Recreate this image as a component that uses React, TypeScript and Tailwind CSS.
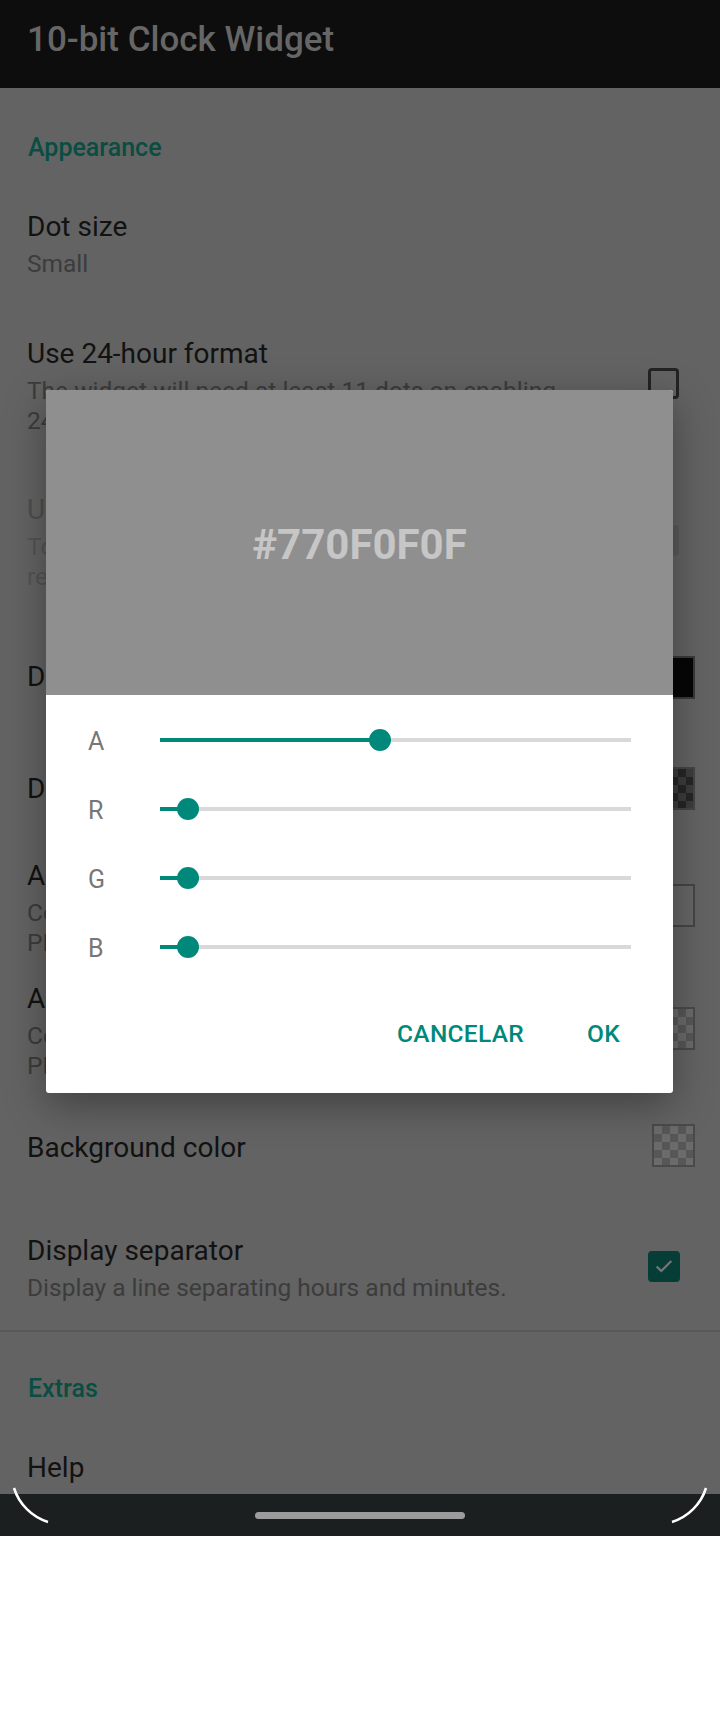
import React from 'react';

// Settings rows behind the dialog (colours are already dimmed by the scrim)
const ROWS = [
  { h: 'h-[127px]', title: 'Dot size', summary: ['Small'] },
  {
    h: 'h-[157px]',
    title: 'Use 24-hour format',
    summary: ['The widget will need at least 11 dots on enabling', '24-hour format.'],
    widget: 'box',
  },
  {
    h: 'h-[156px]',
    title: 'Use accent color for AM/PM',
    summary: ['To enable this option, the widget needs to be', 'resized to have at least 11 dots.'],
    widget: 'disabled',
    disabled: true,
  },
  { h: 'h-[114px]', title: 'Dot color', widget: 'black' },
  { h: 'h-[109px]', title: 'Dot background color', widget: 'dark' },
  {
    h: 'h-[129px]',
    title: 'AM/PM dot color',
    summary: ['Color of the dot used to indicate AM or', 'PM when 24-hour format is disabled.'],
    widget: 'empty',
  },
  {
    h: 'h-[117px]',
    title: 'AM/PM dot background color',
    summary: ['Color behind the dot used to indicate AM or', 'PM when 24-hour format is disabled.'],
    widget: 'light',
  },
  { h: 'h-[117px]', title: 'Background color', widget: 'light' },
  {
    h: 'h-[124px]',
    title: 'Display separator',
    summary: ['Display a line separating hours and minutes.'],
    widget: 'checked',
  },
];

const CHANNELS = [
  { label: 'A', value: 0x77 },
  { label: 'R', value: 0x0f },
  { label: 'G', value: 0x0f },
  { label: 'B', value: 0x0f },
];

function Checker({ a, b }: { a: string; b: string }) {
  const cells = [];
  for (let r = 0; r < 5; r++) {
    for (let c = 0; c < 5; c++) {
      cells.push(
        <rect key={`${r}-${c}`} x={c * 8} y={r * 8} width={8} height={8} fill={(r + c) % 2 ? b : a} />
      );
    }
  }
  return (
    <svg width="39" height="39" className="block">
      {cells}
    </svg>
  );
}

function Widget({ kind }: { kind?: string }) {
  if (!kind) return null;
  if (kind === 'box')
    return <div className="mr-[41px] mb-[4px] w-[31px] h-[31px] rounded-[4px] border-[3px] border-[#232323]" />;
  if (kind === 'disabled')
    return (
      <div className="mr-[41px] mb-[3px] w-[31px] h-[31px] rounded-[4px] bg-[#5a5a5a] flex items-center justify-center">
        <svg width="22" height="22" viewBox="0 0 24 24">
          <path d="M4 12.5l5 5L20 6.5" fill="none" stroke="#626262" strokeWidth="2.6" />
        </svg>
      </div>
    );
  if (kind === 'checked')
    return (
      <div className="mr-[40px] mb-[4px] w-[32px] h-[31px] rounded-[4px] bg-[#073d37] flex items-center justify-center">
        <svg width="22" height="22" viewBox="0 0 24 24">
          <path d="M4 12.5l5 5L20 6.5" fill="none" stroke="#767676" strokeWidth="2.4" />
        </svg>
      </div>
    );
  if (kind === 'black')
    return <div className="mr-[25px] w-[43px] h-[43px] border-2 border-[#3a3a3a] bg-[#060606]" />;
  if (kind === 'empty')
    return <div className="mr-[25px] mb-[5px] w-[43px] h-[43px] border-2 border-[#454545] bg-[#666666]" />;
  if (kind === 'dark')
    return (
      <div className="mr-[25px] w-[43px] h-[43px] border-2 border-[#454545]">
        <Checker a="#3c3c3c" b="#262626" />
      </div>
    );
  return (
    <div className="mr-[25px] mb-[5px] w-[43px] h-[43px] border-2 border-[#4a4a4a]">
      <Checker a="#6b6b6b" b="#575757" />
    </div>
  );
}

function Pref({ row }: { row: (typeof ROWS)[number] }) {
  const titleColor = row.disabled ? 'text-[#4e4e4e]' : 'text-[#121212]';
  const sumColor = row.disabled ? 'text-[#545454]' : 'text-[#3c3c3c]';
  return (
    <div className={`${row.h} flex items-center justify-between pl-[27px]`}>
      <div className="flex flex-col">
        <div className={`text-[28px] leading-[36px] whitespace-nowrap ${titleColor}`}>{row.title}</div>
        {row.summary && (
          <div className={`mt-[4px] text-[24.5px] leading-[30px] ${sumColor}`}>
            {row.summary.map((s) => (
              <div key={s} className="whitespace-nowrap">
                {s}
              </div>
            ))}
          </div>
        )}
      </div>
      <Widget kind={row.widget} />
    </div>
  );
}

function Slider({ label, value }: { label: string; value: number }) {
  const pct = (value / 255) * 100;
  return (
    <div className="h-[69px] flex items-center">
      <div className="w-[72px] pt-[4px] text-[25px] leading-[30px] text-[#777777]">{label}</div>
      <div className="relative flex-1 h-[4px] bg-[#d9d9d9]">
        <div className="absolute left-0 top-0 h-[4px] bg-[#00897b]" style={{ width: `${pct}%` }} />
        <div
          className="absolute top-1/2 w-[22px] h-[22px] -ml-[11px] -mt-[11px] rounded-full bg-[#00897b]"
          style={{ left: `${pct}%` }}
        />
      </div>
    </div>
  );
}

export default function App() {
  return (
    <div className="w-[720px] h-[1712px] bg-white font-['Roboto',sans-serif]">
      <div className="relative w-[720px] h-[1536px] overflow-hidden bg-[#636363] flex flex-col">
        {/* App bar */}
        <div className="h-[88px] shrink-0 bg-[#0d0d0d] pl-[27px] pt-[20px]">
          <div className="text-[35px] leading-[40px] font-medium text-[#666666]">10-bit Clock Widget</div>
        </div>

        {/* Preference list */}
        <div className="flex-1 overflow-hidden">
          <div className="h-[92px] pl-[28px] pt-[45px] text-[25px] leading-[30px] font-medium text-[#094d43]">
            Appearance
          </div>
          {ROWS.map((r) => (
            <Pref key={r.title} row={r} />
          ))}
          <div className="h-[2px] bg-[#585858]" />
          <div className="h-[80px] pl-[28px] pt-[42px] text-[25px] leading-[30px] font-medium text-[#094d43]">
            Extras
          </div>
          <div className="h-[111px] pl-[27px] pt-[38px] text-[28px] leading-[36px] text-[#121212]">Help</div>
        </div>

        {/* Gesture nav bar */}
        <div className="h-[42px] shrink-0 bg-[#1c1f20] flex items-center justify-center">
          <div className="w-[210px] h-[7px] rounded-full bg-[#9a9c9c]" />
        </div>

        {/* Rounded screen corners */}
        <svg className="absolute left-0 bottom-0" width="720" height="60" viewBox="0 1476 720 60">
          <path d="M14 1488 A52 52 0 0 0 48 1522" fill="none" stroke="#ffffff" strokeWidth="2.5" />
          <path d="M706 1488 A52 52 0 0 1 672 1522" fill="none" stroke="#ffffff" strokeWidth="2.5" />
        </svg>

        {/* Color picker dialog */}
        <div className="absolute left-[46px] top-[390px] w-[627px] h-[703px] rounded-[3px] overflow-hidden bg-white flex flex-col shadow-[0_12px_40px_rgba(0,0,0,0.35)]">
          <div className="h-[305px] shrink-0 bg-[#8f8f8f] flex items-center justify-center pt-[4px]">
            <span className="text-[42px] leading-[50px] font-bold text-[#c6c6c6]">#770F0F0F</span>
          </div>
          <div className="flex-1 flex flex-col pl-[42px] pr-[42px] pt-[10px]">
            {CHANNELS.map((c) => (
              <Slider key={c.label} label={c.label} value={c.value} />
            ))}
            <div className="mt-[38px] flex justify-end gap-[63px] pr-[11px] text-[24.5px] leading-[30px] font-medium text-[#00897b] tracking-[0.3px]">
              <span>CANCELAR</span>
              <span>OK</span>
            </div>
          </div>
        </div>
      </div>
    </div>
  );
}
